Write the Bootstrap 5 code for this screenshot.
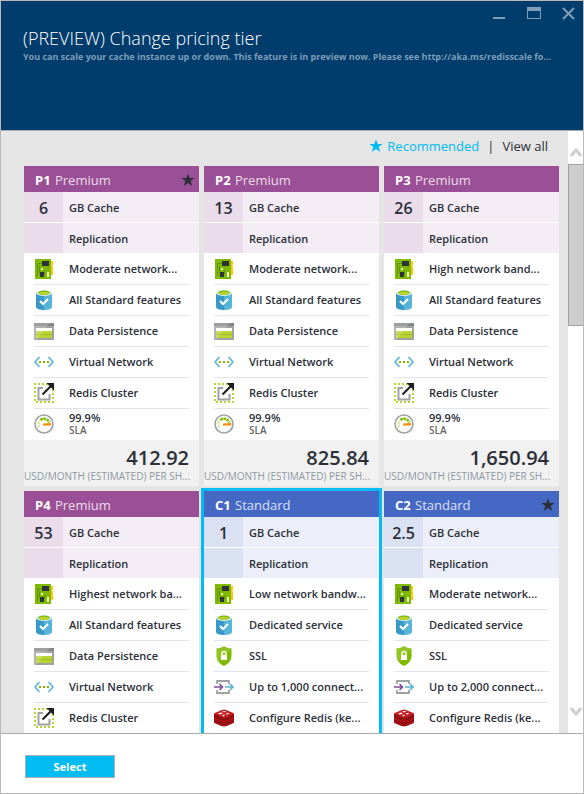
<!DOCTYPE html>
<html lang="en">
<head>
<meta charset="utf-8">
<meta name="viewport" content="width=device-width, initial-scale=1">
<title>Change pricing tier</title>
<link href="https://cdn.jsdelivr.net/npm/bootstrap@5.3.0/dist/css/bootstrap.min.css" rel="stylesheet">
<style>
  body { font-family: "Open Sans", "Noto Sans", sans-serif; color: #2b2f38; font-size: 11px; line-height: 16px; }
  .blade { border: 1px solid #b9b9b9; }
  .blade-head { background: #003c6c; height: 130px; padding: 25px 28px 0 22px; border-bottom: 1px solid #aaa; flex: none; }
  .blade-title { font-size: 18px; line-height: 24px; font-weight: 300; }
  .blade-sub { font-size: 9px; line-height: 14px; color: #7f9eb8; }
  .win-tools { top: 6px; right: 8px; gap: 21px; }
  .plain { background: none; border: 0; padding: 0; display: block; line-height: 0; }
  .plain svg, .feat svg, .tier-head svg { display: block; flex: none; }
  .tier-area { background: #e5e5e5; padding: 0 9px 0 23px; }
  .filters { height: 35px; padding: 0 11px 5px; font-size: 13px; line-height: 20px; }
  .filters a { color: inherit; }
  .filters .on { color: #00bcf2; }
  .tiers { grid-template-columns: repeat(3, minmax(0, 1fr)); gap: 5px; }
  .tier-head { height: 26px; padding: 2px 4px 0 11px; background: #9b4f96; }
  .tier-head h2 { font-size: 13px; line-height: 20px; color: #fff; }
  .tier-head small { font-size: 13px; font-weight: 400; opacity: .8; margin-left: 1px; }
  .spec { height: 31px; border-bottom: 1px solid #fff; background: #f4edf5; }
  .spec-num { width: 39px; background: #eadcea; font-size: 16px; padding-top: 2px; }
  .spec-text { padding: 2px 0 0 6px; }
  .standard .tier-head { background: #4668c5; }
  .standard .spec { background: #eceff9; }
  .standard .spec-num { background: #dae1f3; }
  .feat { height: 31px; margin: 0 10px; border-bottom: 1px solid #e4e3f0; gap: 15px; }
  .feat-last { border-bottom-color: #fff; }
  .sla { line-height: 12px; }
  .sla small { font-size: 10px; line-height: 12px; color: #666; display: block; }
  .price { background: #f1f1f1; height: 46px; padding-top: 6px; }
  .price-sum { font-size: 20px; line-height: 24px; padding-right: 10px; }
  .price-unit { font-size: 10px; line-height: 12px; color: #8d98a3; }
  .chosen { outline: 3px solid #00bcf2; z-index: 1; }
  .scroller { width: 15px; background: #fff; }
  .scroller .plain { padding: 16px 0 16px 2px; }
  .scroller .up { padding-bottom: 6px; }
  .thumb { height: 162px; background: #cdcdcd; border: 1px solid #a0a0a0; border-right: 0; }
  .blade-foot { height: 60px; border-top: 1px solid #aaa; padding: 21px 24px; flex: none; }
  .btn-select { width: 90px; height: 23px; background: #00bcf2; border: 1px solid #a9b1b5; color: #fff; font-size: 11px; line-height: 16px; font-weight: 700; padding: 0; border-radius: 0; }
</style>
<script src="https://cdn.jsdelivr.net/npm/bootstrap@5.3.0/dist/js/bootstrap.bundle.min.js"></script>
</head>
<body>
<svg class="d-none" aria-hidden="true">
  <symbol id="star" viewBox="0 0 14 14"><path d="M7 .5l1.700 4.600h4.800L9.700 8.100l1.500 4.900L7 10.100 2.800 13l1.500-4.900L.5 5.100h4.800z" fill="currentColor"/></symbol>
  <symbol id="board" viewBox="0 0 20 20"><path fill="#ffc800" d="M16 2h3v4h-1v1h1v9h-3z"/><path fill="#7fba00" d="M1 0h16v20H1z"/><path fill="none" stroke="#5e9400" d="M3.500 17V4.500H8M5.500 14V6.500M10.500 15v-4"/><path fill="#2d3338" d="M8 2h7v5H8zM6 13h4v5H6z"/><path fill="#e8f3cf" d="M7 9h2v2H7zM13 13h2v5h-2z"/></symbol>
  <symbol id="data" viewBox="0 0 20 20"><path fill="#3999c6" d="M2 3v14c0 1.700 3.600 3 8 3V3z"/><path fill="#59b4d9" d="M10 3v17c4.400 0 8-1.300 8-3V3z"/><ellipse cx="10" cy="3" rx="8" ry="3" fill="#d9eef7"/><ellipse cx="10" cy="2.700" rx="6" ry="2.200" fill="#7fba00"/><ellipse cx="10" cy="3.300" rx="5" ry="1.500" fill="#b8d432"/><path d="M6 11l3 3 5-5" fill="none" stroke="#fff" stroke-width="2"/></symbol>
  <symbol id="table" viewBox="0 0 20 20"><path fill="#a0a1a2" d="M0 2h20v17H0z"/><path fill="#858687" d="M0 2h20v3H0z"/><path fill="#fff" d="M2 7h16v3H2z"/><path fill="#b8d432" d="M2 10h16v7H2z"/><path fill="#a2bd28" d="M2 13h16v1H2z"/><path fill="#fff" opacity=".2" d="M0 2h16L2 19H0z"/></symbol>
  <symbol id="vnet" viewBox="0 0 20 20"><path d="M5.500 5L1 10l4.500 5M14.500 5l4.500 5-4.500 5" fill="none" stroke="#59b4d9" stroke-width="1.600"/><path fill="#7fba00" d="M5 9h2v2H5zM9 9h2v2H9zM13 9h2v2h-2z"/></symbol>
  <symbol id="cluster" viewBox="0 0 20 20"><path d="M1 1h18v18H1z" fill="none" stroke="#b8d432" stroke-width="2" stroke-dasharray="2 2" stroke-dashoffset="1"/><path d="M9 5H4.500v11.500H15.500V11" fill="none" stroke="#a0a1a2" stroke-width="2"/><path d="M8.500 11.500L17 3" stroke="#1e1e1e" stroke-width="2.200"/><path d="M12.500 0H20v7.500z" fill="#1e1e1e"/></symbol>
  <symbol id="gauge" viewBox="0 0 20 20"><circle cx="10" cy="10" r="9" fill="#fff" stroke="#a0a1a2" stroke-width="1.600"/><path d="M5.500 13.500A5.500 5.500 0 0 1 6.500 6" fill="none" stroke="#dcecb0" stroke-width="2.600" stroke-dasharray="3 .6"/><path d="M6.500 6a5.500 5.500 0 0 1 8.800 2.500" fill="none" stroke="#7fba00" stroke-width="2.600" stroke-dasharray="2.600 .6"/><path fill="#ff8c00" d="M9 9.500l8-.5v2.500H9z"/></symbol>
  <symbol id="shield" viewBox="0 0 20 20"><path fill="#7fba00" d="M10 0c2 1.700 4.500 2.300 7.500 2.300V10c0 5-4 8.500-7.500 10-3.500-1.500-7.500-5-7.500-10V2.300C5.500 2.300 8 1.700 10 0z"/><path fill="#fff" opacity=".15" d="M10 0c2 1.700 4.500 2.300 7.500 2.300L5 16C3.500 14.500 2.500 12.500 2.500 10V2.300C5.500 2.300 8 1.700 10 0z"/><path fill="#fff" d="M7 9h6v5H7z"/><path d="M8 9V7.500a2 2 0 0 1 4 0V9" fill="none" stroke="#fff" stroke-width="1.400"/></symbol>
  <symbol id="link" viewBox="0 0 20 20"><path d="M3 7V4h12v3M3 13v3h12v-3" fill="none" stroke="#a0a1a2" stroke-width="1.800"/><path d="M0 10h8M5.500 7L8.500 10l-3 3" fill="none" stroke="#804998" stroke-width="1.600"/><path d="M11 10h8M16 7l3 3-3 3" fill="none" stroke="#59b4d9" stroke-width="1.600"/></symbol>
  <symbol id="redis" viewBox="0 0 20 20"><path fill="#8f1012" d="M0 6v8.500c0 .6 8 4 10 4s10-3.400 10-4V6z"/><path fill="#b8141a" d="M0 13c2 1.200 8 3.500 10 3.500S18 14.200 20 13v1c-2 1.200-8 3.500-10 3.500S2 15.200 0 14zM0 9.300c2 1.200 8 3.500 10 3.500s8-2.300 10-3.500v1.400c-2 1.200-8 3.500-10 3.500S2 11.900 0 10.700z"/><path fill="#c41e22" d="M0 5.500C1 4.700 8.500 1.500 10 1.500s9 3.200 10 4S11.500 10 10 10 1 6.300 0 5.500z"/><path fill="#fff" d="M4 5.500l3-1 2 1-3 1zM8 2.800l2 .4 2-.4-.5 1.200-2 .3zM12.500 4.800l3 .7-3 1.200zM8 7.200l3-.8L9.800 8.500z"/></symbol>
</svg>

<main class="blade vh-100 d-flex flex-column bg-white">
  <header class="blade-head position-relative">
    <div class="win-tools position-absolute d-flex">
      <button class="plain" type="button" aria-label="Minimize"><svg width="14" height="14"><path fill="#7f9eb8" d="M1 10h12v2H1z"/></svg></button>
      <button class="plain" type="button" aria-label="Maximize"><svg width="14" height="14"><path fill="#7f9eb8" fill-rule="evenodd" d="M0 0h14v12H0zM1 4v7h12V4z"/></svg></button>
      <button class="plain" type="button" aria-label="Close"><svg width="13" height="14"><path stroke="#7f9eb8" stroke-width="2" d="M1 1l11 11M12 1L1 12"/></svg></button>
    </div>
    <h1 class="blade-title text-white m-0">(PREVIEW) Change pricing tier</h1>
    <p class="blade-sub fw-bold text-nowrap m-0">You can scale your cache instance up or down. This feature is in preview now. Please see http://aka.ms/redisscale fo...</p>
  </header>

  <div class="d-flex flex-grow-1 overflow-hidden">
    <section class="tier-area flex-grow-1 overflow-hidden" aria-label="Pricing tiers">
      <nav class="filters d-flex align-items-center justify-content-end">
        <svg class="on me-1" width="14" height="14"><use href="#star"/></svg>
        <a class="on text-decoration-none" href="#recommended">Recommended</a>
        <span class="mx-2">|</span>
        <a class="text-decoration-none" href="#all">View all</a>
      </nav>
      <div class="tiers d-grid fw-semibold text-nowrap">

        <article class="premium bg-white">
          <header class="tier-head d-flex align-items-center justify-content-between"><h2 class="m-0 fw-bold">P1 <small>Premium</small></h2><svg width="14" height="14"><use href="#star"/></svg></header>
          <div class="spec d-flex align-items-stretch"><b class="spec-num d-flex align-items-center justify-content-center fw-semibold">6</b><span class="spec-text align-self-center">GB Cache</span></div>
          <div class="spec d-flex align-items-stretch"><b class="spec-num"></b><span class="spec-text align-self-center">Replication</span></div>
          <ul class="list-unstyled m-0">
            <li class="feat d-flex align-items-center"><svg width="20" height="20"><use href="#board"/></svg>Moderate network...</li>
            <li class="feat d-flex align-items-center"><svg width="20" height="20"><use href="#data"/></svg>All Standard features</li>
            <li class="feat d-flex align-items-center"><svg width="20" height="20"><use href="#table"/></svg>Data Persistence</li>
            <li class="feat d-flex align-items-center"><svg width="20" height="20"><use href="#vnet"/></svg>Virtual Network</li>
            <li class="feat d-flex align-items-center"><svg width="20" height="20"><use href="#cluster"/></svg>Redis Cluster</li>
            <li class="feat feat-last d-flex align-items-center"><svg width="20" height="20"><use href="#gauge"/></svg><span class="sla">99.9%<small>SLA</small></span></li>
          </ul>
          <footer class="price"><div class="price-sum text-end">412.92</div><div class="price-unit fw-normal">USD/MONTH (ESTIMATED) PER SH...</div></footer>
        </article>

        <article class="premium bg-white">
          <header class="tier-head d-flex align-items-center justify-content-between"><h2 class="m-0 fw-bold">P2 <small>Premium</small></h2></header>
          <div class="spec d-flex align-items-stretch"><b class="spec-num d-flex align-items-center justify-content-center fw-semibold">13</b><span class="spec-text align-self-center">GB Cache</span></div>
          <div class="spec d-flex align-items-stretch"><b class="spec-num"></b><span class="spec-text align-self-center">Replication</span></div>
          <ul class="list-unstyled m-0">
            <li class="feat d-flex align-items-center"><svg width="20" height="20"><use href="#board"/></svg>Moderate network...</li>
            <li class="feat d-flex align-items-center"><svg width="20" height="20"><use href="#data"/></svg>All Standard features</li>
            <li class="feat d-flex align-items-center"><svg width="20" height="20"><use href="#table"/></svg>Data Persistence</li>
            <li class="feat d-flex align-items-center"><svg width="20" height="20"><use href="#vnet"/></svg>Virtual Network</li>
            <li class="feat d-flex align-items-center"><svg width="20" height="20"><use href="#cluster"/></svg>Redis Cluster</li>
            <li class="feat feat-last d-flex align-items-center"><svg width="20" height="20"><use href="#gauge"/></svg><span class="sla">99.9%<small>SLA</small></span></li>
          </ul>
          <footer class="price"><div class="price-sum text-end">825.84</div><div class="price-unit fw-normal">USD/MONTH (ESTIMATED) PER SH...</div></footer>
        </article>

        <article class="premium bg-white">
          <header class="tier-head d-flex align-items-center justify-content-between"><h2 class="m-0 fw-bold">P3 <small>Premium</small></h2></header>
          <div class="spec d-flex align-items-stretch"><b class="spec-num d-flex align-items-center justify-content-center fw-semibold">26</b><span class="spec-text align-self-center">GB Cache</span></div>
          <div class="spec d-flex align-items-stretch"><b class="spec-num"></b><span class="spec-text align-self-center">Replication</span></div>
          <ul class="list-unstyled m-0">
            <li class="feat d-flex align-items-center"><svg width="20" height="20"><use href="#board"/></svg>High network band...</li>
            <li class="feat d-flex align-items-center"><svg width="20" height="20"><use href="#data"/></svg>All Standard features</li>
            <li class="feat d-flex align-items-center"><svg width="20" height="20"><use href="#table"/></svg>Data Persistence</li>
            <li class="feat d-flex align-items-center"><svg width="20" height="20"><use href="#vnet"/></svg>Virtual Network</li>
            <li class="feat d-flex align-items-center"><svg width="20" height="20"><use href="#cluster"/></svg>Redis Cluster</li>
            <li class="feat feat-last d-flex align-items-center"><svg width="20" height="20"><use href="#gauge"/></svg><span class="sla">99.9%<small>SLA</small></span></li>
          </ul>
          <footer class="price"><div class="price-sum text-end">1,650.94</div><div class="price-unit fw-normal">USD/MONTH (ESTIMATED) PER SH...</div></footer>
        </article>

        <article class="premium bg-white">
          <header class="tier-head d-flex align-items-center justify-content-between"><h2 class="m-0 fw-bold">P4 <small>Premium</small></h2></header>
          <div class="spec d-flex align-items-stretch"><b class="spec-num d-flex align-items-center justify-content-center fw-semibold">53</b><span class="spec-text align-self-center">GB Cache</span></div>
          <div class="spec d-flex align-items-stretch"><b class="spec-num"></b><span class="spec-text align-self-center">Replication</span></div>
          <ul class="list-unstyled m-0">
            <li class="feat d-flex align-items-center"><svg width="20" height="20"><use href="#board"/></svg>Highest network ba...</li>
            <li class="feat d-flex align-items-center"><svg width="20" height="20"><use href="#data"/></svg>All Standard features</li>
            <li class="feat d-flex align-items-center"><svg width="20" height="20"><use href="#table"/></svg>Data Persistence</li>
            <li class="feat d-flex align-items-center"><svg width="20" height="20"><use href="#vnet"/></svg>Virtual Network</li>
            <li class="feat d-flex align-items-center"><svg width="20" height="20"><use href="#cluster"/></svg>Redis Cluster</li>
          </ul>
        </article>

        <article class="standard chosen bg-white position-relative">
          <header class="tier-head d-flex align-items-center justify-content-between"><h2 class="m-0 fw-bold">C1 <small>Standard</small></h2></header>
          <div class="spec d-flex align-items-stretch"><b class="spec-num d-flex align-items-center justify-content-center fw-semibold">1</b><span class="spec-text align-self-center">GB Cache</span></div>
          <div class="spec d-flex align-items-stretch"><b class="spec-num"></b><span class="spec-text align-self-center">Replication</span></div>
          <ul class="list-unstyled m-0">
            <li class="feat d-flex align-items-center"><svg width="20" height="20"><use href="#board"/></svg>Low network bandw...</li>
            <li class="feat d-flex align-items-center"><svg width="20" height="20"><use href="#data"/></svg>Dedicated service</li>
            <li class="feat d-flex align-items-center"><svg width="20" height="20"><use href="#shield"/></svg>SSL</li>
            <li class="feat d-flex align-items-center"><svg width="20" height="20"><use href="#link"/></svg>Up to 1,000 connect...</li>
            <li class="feat d-flex align-items-center"><svg width="20" height="20"><use href="#redis"/></svg>Configure Redis (ke...</li>
          </ul>
        </article>

        <article class="standard bg-white">
          <header class="tier-head d-flex align-items-center justify-content-between"><h2 class="m-0 fw-bold">C2 <small>Standard</small></h2><svg width="14" height="14"><use href="#star"/></svg></header>
          <div class="spec d-flex align-items-stretch"><b class="spec-num d-flex align-items-center justify-content-center fw-semibold">2.5</b><span class="spec-text align-self-center">GB Cache</span></div>
          <div class="spec d-flex align-items-stretch"><b class="spec-num"></b><span class="spec-text align-self-center">Replication</span></div>
          <ul class="list-unstyled m-0">
            <li class="feat d-flex align-items-center"><svg width="20" height="20"><use href="#board"/></svg>Moderate network...</li>
            <li class="feat d-flex align-items-center"><svg width="20" height="20"><use href="#data"/></svg>Dedicated service</li>
            <li class="feat d-flex align-items-center"><svg width="20" height="20"><use href="#shield"/></svg>SSL</li>
            <li class="feat d-flex align-items-center"><svg width="20" height="20"><use href="#link"/></svg>Up to 2,000 connect...</li>
            <li class="feat d-flex align-items-center"><svg width="20" height="20"><use href="#redis"/></svg>Configure Redis (ke...</li>
          </ul>
        </article>
      </div>
    </section>

    <div class="scroller d-flex flex-column flex-shrink-0">
      <button class="plain up" type="button" aria-label="Scroll up"><svg width="12" height="11"><path d="M1 9l5-6 5 6" fill="none" stroke="#cdcdcd" stroke-width="3"/></svg></button>
      <div class="thumb"></div>
      <button class="plain mt-auto" type="button" aria-label="Scroll down"><svg width="12" height="11"><path d="M1 2l5 6 5-6" fill="none" stroke="#cdcdcd" stroke-width="3"/></svg></button>
    </div>
  </div>

  <footer class="blade-foot">
    <button class="btn btn-select d-block" type="button">Select</button>
  </footer>
</main>
</body>
</html>
